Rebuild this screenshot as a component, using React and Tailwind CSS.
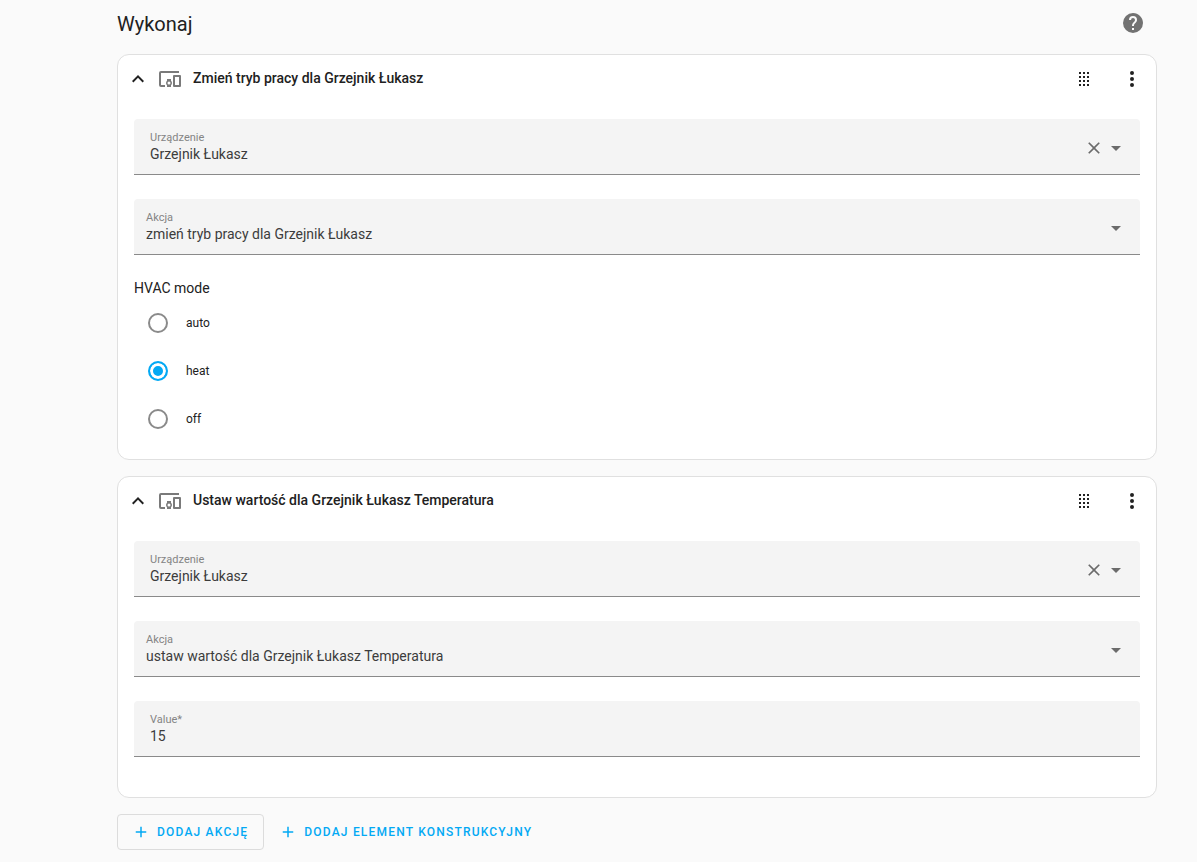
import { useId, useState } from "react";

const ICONS = {
  help: "M15.07,11.25L14.17,12.17C13.45,12.89 13,13.5 13,15H11V14.5C11,13.39 11.45,12.39 12.17,11.67L13.41,10.41C13.78,10.05 14,9.55 14,9C14,7.89 13.1,7 12,7A2,2 0 0,0 10,9H8A4,4 0 0,1 12,5A4,4 0 0,1 16,9C16,9.88 15.64,10.67 15.07,11.25M13,19H11V17H13M12,2A10,10 0 0,0 2,12A10,10 0 0,0 12,22A10,10 0 0,0 22,12C22,6.47 17.5,2 12,2Z",
  chevronUp: "M7.41,15.41L12,10.83L16.59,15.41L18,14L12,8L6,14L7.41,15.41Z",
  devices:
    "M3,6H21V4H3A2,2 0 0,0 1,6V18A2,2 0 0,0 3,20H7V18H3V6M13,12H9V13.78C8.39,14.33 8,15.11 8,16C8,16.89 8.39,17.67 9,18.22V20H13V18.22C13.61,17.67 14,16.88 14,16C14,15.12 13.61,14.33 13,13.78V12M11,17.5A1.5,1.5 0 0,1 9.5,16A1.5,1.5 0 0,1 11,14.5A1.5,1.5 0 0,1 12.5,16A1.5,1.5 0 0,1 11,17.5M22,8H16A1,1 0 0,0 15,9V19A1,1 0 0,0 16,20H22A1,1 0 0,0 23,19V9A1,1 0 0,0 22,8M21,18H17V10H21V18Z",
  drag: "M7,5H9V7H7V5M11,5H13V7H11V5M15,5H17V7H15V5M7,9H9V11H7V9M11,9H13V11H11V9M15,9H17V11H15V9M7,13H9V15H7V13M11,13H13V15H11V13M15,13H17V15H15V13M7,17H9V19H7V17M11,17H13V19H11V17M15,17H17V19H15V17Z",
  dots: "M12,16A2,2 0 0,1 14,18A2,2 0 0,1 12,20A2,2 0 0,1 10,18A2,2 0 0,1 12,16M12,10A2,2 0 0,1 14,12A2,2 0 0,1 12,14A2,2 0 0,1 10,12A2,2 0 0,1 12,10M12,4A2,2 0 0,1 14,6A2,2 0 0,1 12,8A2,2 0 0,1 10,6A2,2 0 0,1 12,4Z",
  close:
    "M19,6.41L17.59,5L12,10.59L6.41,5L5,6.41L10.59,12L5,17.59L6.41,19L12,13.41L17.59,19L19,17.59L13.41,12L19,6.41Z",
  menuDown: "M7,10L12,15L17,10H7Z",
  plus: "M19,13H13V19H11V13H5V11H11V5H13V11H19V13Z",
};

function Icon({ name, className = "size-6" }) {
  return (
    <svg viewBox="0 0 24 24" fill="currentColor" aria-hidden="true" className={`shrink-0 ${className}`}>
      <path d={ICONS[name]} />
    </svg>
  );
}

function Field({ id, label, className = "pl-4", trailing, children }) {
  return (
    <div
      className={`mb-6 flex h-14 items-stretch rounded-t border-b border-[#8a8a8a] bg-[#f4f4f4] pr-3 ${className}`}
    >
      <div className="flex min-w-0 flex-1 flex-col pt-[13px]">
        <label htmlFor={id} className="text-[11px] leading-3 text-[#848484]">
          {label}
        </label>
        {children}
      </div>
      <div className="flex items-center pt-0.5 text-[#6b6b6b]">{trailing}</div>
    </div>
  );
}

function DeviceField() {
  const id = useId();
  const [value, setValue] = useState("Grzejnik Łukasz");

  return (
    <Field
      id={id}
      label="Urządzenie"
      trailing={
        <>
          <button type="button" aria-label="Wyczyść" onClick={() => setValue("")}>
            <Icon name="close" className="size-5" />
          </button>
          <button type="button" aria-label="Rozwiń">
            <Icon name="menuDown" />
          </button>
        </>
      }
    >
      <input
        id={id}
        role="combobox"
        aria-expanded="false"
        value={value}
        onChange={(event) => setValue(event.target.value)}
        className="h-5 w-full bg-transparent text-sm text-[#3c3c3c] outline-none"
      />
    </Field>
  );
}

function ActionField({ options }) {
  const id = useId();

  return (
    <Field id={id} label="Akcja" className="pl-3" trailing={<Icon name="menuDown" />}>
      <select
        id={id}
        className="h-5 w-full appearance-none bg-transparent text-sm text-[#3c3c3c] outline-none"
      >
        {options.map((option) => (
          <option key={option}>{option}</option>
        ))}
      </select>
    </Field>
  );
}

function ValueField() {
  const id = useId();

  return (
    <Field id={id} label="Value*">
      <input
        id={id}
        required
        inputMode="numeric"
        defaultValue="15"
        className="h-5 w-full bg-transparent text-sm text-[#3c3c3c] outline-none"
      />
    </Field>
  );
}

function HvacMode() {
  const [mode, setMode] = useState("heat");

  return (
    <fieldset>
      <legend className="pb-0.5 text-sm leading-[18px]">HVAC mode</legend>
      {["auto", "heat", "off"].map((option) => (
        <label key={option} className="flex h-12 items-center gap-[18px] pl-3.5 text-xs">
          <input
            type="radio"
            name="hvac-mode"
            value={option}
            checked={mode === option}
            onChange={() => setMode(option)}
            className="size-5 appearance-none rounded-full border-2 border-[#8a8a8a] checked:border-[#03a9f4] checked:bg-[#03a9f4] checked:shadow-[inset_0_0_0_3px_#fff]"
          />
          {option}
        </label>
      ))}
    </fieldset>
  );
}

function ActionCard({ title, children }) {
  return (
    <section className="mb-4 rounded-xl border border-[#e0e0e0] bg-white">
      <header className="flex h-12 items-center pl-2">
        <button type="button" aria-label="Zwiń">
          <Icon name="chevronUp" />
        </button>
        <Icon name="devices" className="ml-2 size-6 text-[#7a7a7a]" />
        <h2 className="ml-[11px] flex-1 pb-0.5 text-sm font-medium">{title}</h2>
        <button type="button" aria-label="Przenieś" className="p-3">
          <Icon name="drag" />
        </button>
        <button type="button" aria-label="Menu" className="p-3">
          <Icon name="dots" />
        </button>
      </header>
      <div className="p-4">{children}</div>
    </section>
  );
}

function App() {
  return (
    <div className="min-h-screen bg-[#fafafa] font-['Roboto',sans-serif] text-[#212121]">
      <main className="pr-10 pb-3 pl-[117px]">
        <div className="mb-2 flex h-[46px] items-center justify-between">
          <h1 className="pt-0.5 text-xl">Wykonaj</h1>
          <button type="button" aria-label="Pomoc" className="px-3 text-[#727272]">
            <Icon name="help" />
          </button>
        </div>

        <ActionCard title="Zmień tryb pracy dla Grzejnik Łukasz">
          <DeviceField />
          <ActionField options={["zmień tryb pracy dla Grzejnik Łukasz"]} />
          <HvacMode />
        </ActionCard>

        <ActionCard title="Ustaw wartość dla Grzejnik Łukasz Temperatura">
          <DeviceField />
          <ActionField options={["ustaw wartość dla Grzejnik Łukasz Temperatura"]} />
          <ValueField />
        </ActionCard>

        <div className="flex gap-2 text-xs font-medium tracking-widest text-[#03a9f4] uppercase">
          <button
            type="button"
            className="flex h-9 items-center gap-[7px] rounded border border-[#dcdcdc] pr-[15px] pl-3.5 uppercase"
          >
            <Icon name="plus" className="size-[18px]" />
            Dodaj akcję
          </button>
          <button type="button" className="flex h-9 items-center gap-[7px] rounded px-[7px] uppercase">
            <Icon name="plus" className="size-[18px]" />
            Dodaj element konstrukcyjny
          </button>
        </div>
      </main>
    </div>
  );
}

export default App;
